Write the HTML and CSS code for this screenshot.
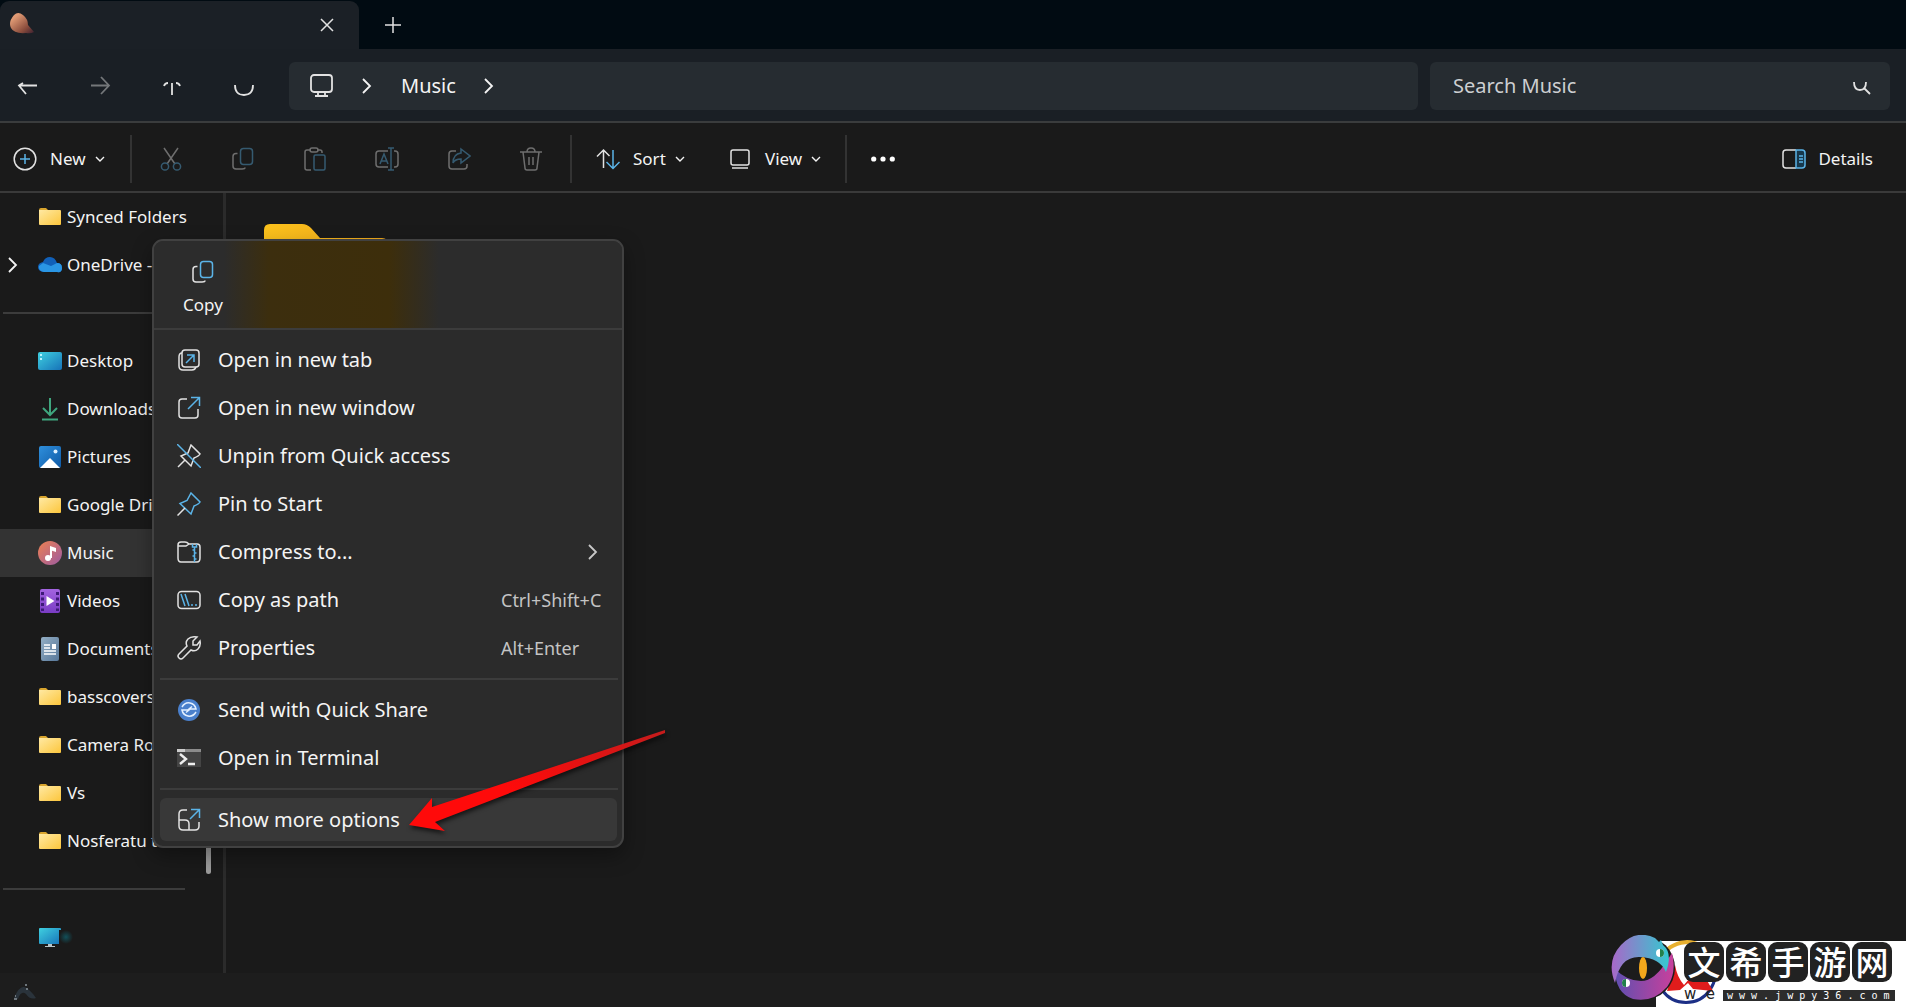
FILE: index.html
```html
<!DOCTYPE html>
<html lang="en">
<head>
<meta charset="utf-8">
<title>Music</title>
<link rel="stylesheet" href="styles.css">
</head>
<body>
<svg class="defs" aria-hidden="true">
  <defs>
    <linearGradient id="g-folder" x1="0" y1="0" x2="1" y2="1"><stop offset="0" stop-color="#ffe9a3"/><stop offset="1" stop-color="#fcc63c"/></linearGradient>
    <linearGradient id="g-desk" x1="0" y1="0" x2="1" y2="1"><stop offset="0" stop-color="#3fd0e0"/><stop offset="1" stop-color="#1672b8"/></linearGradient>
    <linearGradient id="g-pic" x1="0" y1="0" x2="1" y2="1"><stop offset="0" stop-color="#2f8fdc"/><stop offset="1" stop-color="#0f5aa6"/></linearGradient>
    <linearGradient id="g-music" x1="0" y1="0" x2="1" y2="1"><stop offset="0" stop-color="#ee8050"/><stop offset="1" stop-color="#9c5ba2"/></linearGradient>
    <linearGradient id="g-video" x1="0" y1="0" x2="0" y2="1"><stop offset="0" stop-color="#a364e0"/><stop offset="1" stop-color="#7a3cc4"/></linearGradient>
    <linearGradient id="g-doc" x1="0" y1="0" x2="1" y2="1"><stop offset="0" stop-color="#93aec4"/><stop offset="1" stop-color="#58789a"/></linearGradient>
    <linearGradient id="g-big" x1="0" y1="0" x2="1" y2="0"><stop offset="0" stop-color="#fcc21c"/><stop offset="1" stop-color="#f0a81c"/></linearGradient>
    <linearGradient id="g-tab" x1="0" y1="0" x2="1" y2="1"><stop offset="0.2" stop-color="#e09a74"/><stop offset="0.7" stop-color="#8a4c3c"/><stop offset="1" stop-color="#3a2030"/></linearGradient>
    <linearGradient id="g-eye-a" x1="0" y1="0" x2="1" y2="0"><stop offset="0" stop-color="#a868c8"/><stop offset="1" stop-color="#35c8d0"/></linearGradient>
    <linearGradient id="g-eye-b" x1="0" y1="0" x2="1" y2="0"><stop offset="0" stop-color="#5f4fb0"/><stop offset="1" stop-color="#c8409c"/></linearGradient>
    <linearGradient id="g-arrow" x1="0" y1="1" x2="1" y2="0"><stop offset="0.4" stop-color="#ff0a0a"/><stop offset="1" stop-color="#c41c1c"/></linearGradient>
  </defs>
  <symbol id="folder" viewBox="0 0 24 24"><path d="M1 5q0-2 2-2h5l2 2v3H1z" fill="#d9a52e"/><path d="M1 5h21q1 0 1 1v13q0 1-1 1H2q-1 0-1-1z" fill="url(#g-folder)"/></symbol>
  <symbol id="chev-down" viewBox="0 0 12 12"><path d="M2 4l4 4 4-4" fill="none" stroke="currentColor" stroke-width="1.4"/></symbol>
  <symbol id="chev-right" viewBox="0 0 16 16"><path d="M4 1l7 7-7 7" fill="none" stroke="currentColor" stroke-width="1.8"/></symbol>
  <symbol id="copy" viewBox="0 0 24 24"><rect x="9.500" y="1.500" width="12" height="16" rx="3" class="b"/><path d="M6.500 6.500H5Q2 6.500 2 9.500V19q0 3 3 3h6q3 0 3-1.500" class="w"/></symbol>
</svg>

<header class="tabstrip">
  <div class="tab">
    <svg class="i24" viewBox="0 0 24 24"><path d="M4 2q4-4 9 0t5 10l6 7q-3 2-8 1Q4 21 1 15T4 2z" fill="url(#g-tab)"/></svg>
    <button class="plain" aria-label="Close tab"><svg class="i16" viewBox="0 0 16 16"><path d="M2 2l12 12M14 2L2 14" class="w"/></svg></button>
  </div>
  <button class="plain newtab" aria-label="New tab"><svg class="i16" viewBox="0 0 16 16"><path d="M8 0v16M0 8h16" class="w"/></svg></button>
</header>

<nav class="navbar" aria-label="Navigation">
  <button class="iconbtn" aria-label="Back"><svg class="i24" viewBox="0 0 24 24"><path d="M3 11.500h18M10 20l-7-8.500 4-2.500" class="w2"/></svg></button>
  <button class="iconbtn dim" aria-label="Forward"><svg class="i24" viewBox="0 0 24 24"><path d="M3 11.500h18M13 3l8 8.500-8 8.500" class="w2"/></svg></button>
  <button class="iconbtn" aria-label="Up"><svg class="i24" viewBox="0 0 24 24"><path d="M12 9v12M4 12q1-3 4-3M20 12q-1-3-4-3" class="w2"/></svg></button>
  <button class="iconbtn" aria-label="Refresh"><svg class="i24" viewBox="0 0 24 24"><path d="M3 11q0 10 9 10t9-10" class="w2"/></svg></button>
  <div class="address">
    <svg class="i24 pc" viewBox="0 0 24 24"><rect x="2" y="1" width="21" height="17" rx="3" class="w2"/><path d="M9 18v4M16 18v4M6 22h13" class="w2"/></svg>
    <svg class="i16"><use href="#chev-right"/></svg>
    <a class="crumb" href="#music">Music</a>
    <svg class="i16"><use href="#chev-right"/></svg>
  </div>
  <div class="search">
    <input type="search" placeholder="Search Music" aria-label="Search Music">
    <svg class="i24" viewBox="0 0 24 24"><path d="M4 8q0 8 6 8t6-8M14 14l6 6" class="w2"/></svg>
  </div>
</nav>

<div class="commands" role="toolbar" aria-label="Commands">
  <button class="cmd new"><svg class="i24" viewBox="0 0 24 24"><circle cx="12" cy="12" r="10.800" class="w"/><path d="M12 7v10M7 12h10" class="b"/></svg><span>New</span><svg class="i12"><use href="#chev-down"/></svg></button>
  <i class="vr"></i>
  <div class="group">
    <button class="iconbtn off" aria-label="Cut"><svg class="i24" viewBox="0 0 24 24"><path d="M5 1l11 16M19 1L8 17" class="w"/><circle cx="6" cy="19.500" r="3.600" class="b"/><circle cx="18" cy="19.500" r="3.600" class="b"/></svg></button>
    <button class="iconbtn off" aria-label="Copy"><svg class="i24"><use href="#copy"/></svg></button>
    <button class="iconbtn off" aria-label="Paste"><svg class="i24" viewBox="0 0 24 24"><path d="M8 3H4Q2 3 2 5v16q0 2 2 2h4M14 3h3q2 0 2 2v1" class="w"/><rect x="7" y="1" width="8" height="4" rx="2" class="w"/><rect x="11" y="8" width="11" height="15" rx="1.500" class="b"/></svg></button>
    <button class="iconbtn off" aria-label="Rename"><svg class="i24" viewBox="0 0 24 24"><path d="M13 4H4Q1 4 1 7v10q0 3 3 3h9M19 4h1q3 0 3 3v10q0 3-3 3h-1" class="w"/><path d="M5 17l4-10 4 10M6 14h6M16 1v22M13 1h6M13 23h6" class="b"/></svg></button>
    <button class="iconbtn off" aria-label="Share"><svg class="i24" viewBox="0 0 24 24"><path d="M9 4H5Q2 4 2 7v12q0 3 3 3h12q3 0 3-3v-2" class="w"/><path d="M14 2l9 7-9 7v-4q-6 0-8 4 0-9 8-10z" class="b"/></svg></button>
    <button class="iconbtn off" aria-label="Delete"><svg class="i24" viewBox="0 0 24 24"><path d="M1 5h22M8 5q0-4 4-4t4 4M4 5l2 16q0 2 2 2h8q2 0 2-2l2-16M10 10v8M14 10v8" class="w"/></svg></button>
  </div>
  <i class="vr"></i>
  <button class="cmd sort"><svg class="i24" viewBox="0 0 24 24"><path d="M7.500 21V3M1 9.500L7.500 3l6 6" class="w"/><path d="M17 3v18M10.500 15l6.500 6.500 6.500-6.500" class="b"/></svg><span>Sort</span><svg class="i12"><use href="#chev-down"/></svg></button>
  <button class="cmd view"><svg class="i24" viewBox="0 0 24 24"><rect x="3" y="3" width="18" height="15" rx="2" class="w"/><path d="M4 21h16" class="w"/></svg><span>View</span><svg class="i12"><use href="#chev-down"/></svg></button>
  <i class="vr"></i>
  <button class="cmd more" aria-label="See more"><svg class="i24" viewBox="0 0 24 24"><g fill="#fff"><circle cx="2.700" cy="12" r="2.600"/><circle cx="12" cy="12" r="2.600"/><circle cx="21.300" cy="12" r="2.600"/></g></svg></button>
  <button class="cmd details"><svg class="i24" viewBox="0 0 24 24"><path d="M14 3h6q3 0 3 3v12q0 3-3 3h-6z" fill="#17384c"/><path d="M14 3H4Q1 3 1 6v12q0 3 3 3h10" class="w"/><path d="M14 3h6q3 0 3 3v12q0 3-3 3h-6zM17 9h4M17 12h4M17 15h4" class="b"/></svg><span>Details</span></button>
</div>

<div class="body">
  <aside class="sidebar">
    <a class="row" href="#synced"><i class="tw"></i><svg class="i24"><use href="#folder"/></svg><span>Synced Folders</span></a>
    <a class="row" href="#onedrive"><i class="tw"><svg class="i16"><use href="#chev-right"/></svg></i><svg class="i24" viewBox="0 0 24 24"><path d="M5 19Q0 18 0 14t5-5q2-5 7-5t7 6q5 0 5 5t-5 4z" fill="#1160b8"/><path d="M6 19Q0 18 1 13l4-3 8 3 6-3q5 0 5 5t-5 4z" fill="#2a96e4"/></svg><span>OneDrive - Personal</span></a>
    <hr>
    <a class="row" href="#desktop"><i class="tw"></i><svg class="i24" viewBox="0 0 24 24"><rect y="3" width="24" height="18" rx="2" fill="url(#g-desk)"/><path d="M2 5h2v2H2zM2 9h2v2H2zM18 20h2M21 20h2" fill="#b8f4ff"/></svg><span>Desktop</span></a>
    <a class="row" href="#downloads"><i class="tw"></i><svg class="i24" viewBox="0 0 24 24"><path d="M12 1v17M5 11l7 7 7-7M4 22.500h16" fill="none" stroke="#3fa67e" stroke-width="2"/></svg><span>Downloads</span></a>
    <a class="row" href="#pictures"><i class="tw"></i><svg class="i24" viewBox="0 0 24 24"><rect x="1" y="1" width="22" height="22" rx="2" fill="url(#g-pic)"/><path d="M2 23l10-10 10 10z" fill="#fff"/><circle cx="17.500" cy="6.500" r="2" fill="#dff1ff"/></svg><span>Pictures</span></a>
    <a class="row" href="#drive"><i class="tw"></i><svg class="i24"><use href="#folder"/></svg><span>Google Drive</span></a>
    <a class="row current" href="#music" aria-current="page"><i class="tw"></i><svg class="i24" viewBox="0 0 24 24"><circle cx="12" cy="12" r="12" fill="url(#g-music)"/><circle cx="10" cy="17" r="3" fill="#fff"/><path d="M12 17V5l6 2v4l-4-1.300V17z" fill="#fff"/></svg><span>Music</span></a>
    <a class="row" href="#videos"><i class="tw"></i><svg class="i24" viewBox="0 0 24 24"><rect x="2" width="20" height="24" rx="2" fill="url(#g-video)"/><path d="M4.500 3v19M19.500 3v19" stroke="#3e1a78" stroke-width="3" stroke-dasharray="3 2.500"/><path d="M8.500 7v10l8-5z" fill="#fff"/></svg><span>Videos</span></a>
    <a class="row" href="#documents"><i class="tw"></i><svg class="i24" viewBox="0 0 24 24"><rect x="3" width="18" height="24" rx="2" fill="url(#g-doc)"/><path d="M6 8h6M6 11h6M6 14h12M6 17h12" stroke="#fff" stroke-width="1.400"/><path d="M14 7h4v5h-4z" fill="#fff"/></svg><span>Documents</span></a>
    <a class="row" href="#basscovers"><i class="tw"></i><svg class="i24"><use href="#folder"/></svg><span>basscovers</span></a>
    <a class="row" href="#camera"><i class="tw"></i><svg class="i24"><use href="#folder"/></svg><span>Camera Roll</span></a>
    <a class="row" href="#vs"><i class="tw"></i><svg class="i24"><use href="#folder"/></svg><span>Vs</span></a>
    <a class="row" href="#nosferatu"><i class="tw"></i><svg class="i24"><use href="#folder"/></svg><span>Nosferatu t...</span></a>
    <hr>
    <a class="row" href="#pc" aria-label="This PC"><i class="tw"></i><svg class="i24" viewBox="0 0 24 24"><rect x="1" y="3" width="22" height="16" rx="1" fill="url(#g-desk)"/><path d="M10 19h4v2h3v1H7v-1h3z" fill="#b8c4c8"/></svg><i class="smudge"></i></a>
    <i class="thumb"></i>
  </aside>
  <main class="files">
    <svg class="bigfolder" viewBox="0 0 124 100"><path d="M0 6q0-6 6-6h32q5 0 9 4l9 10h62q6 0 6 6v80H0z" fill="url(#g-big)"/></svg>
  </main>
</div>

<footer class="status"><svg class="i24" viewBox="0 0 24 24"><path d="M2 18q5-12 10-11t12 11q-6 2-10-4-5-4-8 5z" fill="#2a333b"/><path d="M13 5h2M14 9h2M2 19h3M3 16h1" stroke="#88929a" stroke-width="1.500"/></svg></footer>

<div class="menu" role="menu">
  <div class="quick"><button class="copybtn" role="menuitem"><svg class="i24"><use href="#copy"/></svg><span>Copy</span></button></div>
  <div class="items">
    <button class="item" role="menuitem"><svg class="i24" viewBox="0 0 24 24"><rect x="5" y="2" width="17" height="17" rx="3" class="w"/><path d="M5 5q-3 0-3 4v9q0 4 4 4h9q3 0 4-3" class="w"/><path d="M9 15l8-8M10 7h7v7" class="b"/></svg><span>Open in new tab</span></button>
    <button class="item" role="menuitem"><svg class="i24" viewBox="0 0 24 24"><path d="M10 3H5Q2 3 2 6v13q0 3 3 3h13q3 0 3-3v-6" class="w"/><path d="M11 13L22 2M14 1.500h8.500V10" class="b"/></svg><span>Open in new window</span></button>
    <button class="item" role="menuitem"><svg class="i24" viewBox="0 0 24 24"><path d="M14 1l9 9q-1 2-6 4l-3 8-10-10 7-3zM8 16l-7 7" class="w"/><path d="M0 0l24 24" class="b"/></svg><span>Unpin from Quick access</span></button>
    <button class="item" role="menuitem"><svg class="i24" viewBox="0 0 24 24"><path d="M14 1l9 9q-1 2-6 4l-3 8L3 11.500l7-3z" class="b"/><path d="M8 16l-7.500 7.500" class="w"/></svg><span>Pin to Start</span></button>
    <button class="item" role="menuitem"><svg class="i24" viewBox="0 0 24 24"><path d="M1 6h8l3-2M1 5q0-3 3-3h4q2 0 4 2h8q3 0 3 3v11q0 4-3 4H4q-3 0-3-4z" class="w"/><path d="M15.500 4v3h4V4M17.500 7v15M17.500 10h-2M17.500 13h2M17.500 16h-2M17.500 19h2" class="b"/></svg><span>Compress to...</span><svg class="i16 sub"><use href="#chev-right"/></svg></button>
    <button class="item" role="menuitem"><svg class="i24" viewBox="0 0 24 24"><rect x="1" y="3.500" width="22" height="17" rx="3.500" class="w"/><path d="M4 6l4 12M8 6l4 12M14 17h2M18 17h2" class="b"/></svg><span>Copy as path</span><kbd>Ctrl+Shift+C</kbd></button>
    <button class="item" role="menuitem"><svg class="i24" viewBox="0 0 24 24"><path d="M20 1l-4 4v4h4l3-4q1 5-2 8t-7 1l-8 8q-2 2-4 0t0-4l8-8q-2-4 1-7t9-2z" class="w"/></svg><span>Properties</span><kbd>Alt+Enter</kbd></button>
    <hr>
    <button class="item" role="menuitem"><svg class="i24" viewBox="0 0 24 24"><circle cx="12" cy="12" r="11" fill="#4a80cc"/><path d="M5 9q3-5 8-4t6 6h-7l3-2.500M19 14q-3 5-8 4t-6-6h7l-3 2.500" fill="none" stroke="#e4f0ff" stroke-width="1.500"/></svg><span>Send with Quick Share</span></button>
    <button class="item" role="menuitem"><svg class="i24" viewBox="0 0 24 24"><path d="M0 3h24v18H0z" fill="#444"/><path d="M0 3h24v3H0z" fill="#8c8c8c"/><path d="M0 3h8v3H0z" fill="#ccc"/><path d="M3 8l6 5-6 5M11 18h7" fill="none" stroke="#eee" stroke-width="2.400"/></svg><span>Open in Terminal</span></button>
    <hr>
    <button class="item hot" role="menuitem"><svg class="i24" viewBox="0 0 24 24"><path d="M10 2H6Q2 2 2 6v12q0 4 4 4h12q4 0 4-4v-4M2 12h6q4 0 4 4v6" class="w"/><path d="M13 11l9-9M14 1.500h8.500V10" class="b"/></svg><span>Show more options</span></button>
  </div>
</div>

<svg class="pointer" viewBox="0 0 260 106" aria-hidden="true"><path d="M257 1v3L27 93l10 9L1 96 24 69v9z" fill="url(#g-arrow)"/></svg>

<div class="mark">
  <svg class="logo" viewBox="0 0 112 72" aria-hidden="true">
    <path d="M50 23A29 29 0 0 1 100 20" fill="none" stroke="#e8b030" stroke-width="4"/>
    <path d="M102 28A29 29 0 1 1 48 28" fill="none" stroke="#1c2f86" stroke-width="3"/>
    <path d="M56 56l8-26q2 12 9 20l10-12 8-20q0 16 3 24l8 14-20-2-5-6-8 7z" fill="#e01c1c"/>
    <circle cx="32" cy="33" r="32" fill="#1c1c1c"/>
    <path d="M4 34Q16 46 30 46t27-22l4-6q5 20-5 34-14 16-34 12Q4 58 4 34z" fill="url(#g-eye-b)"/>
    <path d="M4 48Q-5 26 10 10T44 3l4 4 2-2 2 5q10 8 3 27-6-14-26-15T4 48z" fill="url(#g-eye-a)"/>
    <ellipse cx="32" cy="33" rx="4" ry="11" fill="#f4a81c"/>
    <circle cx="49" cy="18" r="4" fill="#fff"/><circle cx="15" cy="48" r="4" fill="#fff"/><path d="M49 14a4 4 0 0 1 0 8zM15 44a4 4 0 0 0 0 8z" fill="#22804c"/>
  </svg>
  <div class="stamps"><b>文</b><b>希</b><b>手</b><b>游</b><b>网</b></div>
  <div class="url"><span>w&nbsp; e</span><span class="bar">w w w . j w p y 3 6 . c o m</span></div>
</div>
</body>
</html>
```
FILE: styles.css
```css
* { box-sizing: border-box; }
html, body { height: 100%; margin: 0; }
body {
  display: flex;
  flex-direction: column;
  position: relative;
  overflow: hidden;
  background: #1a1a1a;
  color: #f4f4f4;
  font: 17px/24px "Noto Sans", "Noto Sans CJK SC", sans-serif;
}
button, input { font: inherit; color: inherit; background: none; border: 0; padding: 0; }
a { color: inherit; text-decoration: none; }
svg { display: block; flex: none; }
.defs { position: absolute; width: 0; height: 0; }
.i24 { width: 24px; height: 24px; }
.i16 { width: 16px; height: 16px; }
.i12 { width: 12px; height: 12px; }
.w, .w2 { fill: none; stroke: #e2e2e2; stroke-width: 1.5; }
.w2 { stroke-width: 1.8; }
.b { fill: none; stroke: #5bb4e8; stroke-width: 1.5; }

.tabstrip { display: flex; flex: none; height: 49px; padding-top: 1px; background: #010b12; }
.tab {
  display: flex; align-items: center; justify-content: space-between;
  width: 359px; padding: 0 24px 0 10px;
  background: #1b2026; border-radius: 9px 9px 0 0;
}
.plain { display: flex; align-items: center; }
.newtab { margin-left: 26px; }

.navbar {
  display: flex; flex: none; align-items: center;
  height: 74px; padding: 2px 16px 0 8px;
  background: #1a1f25; border-bottom: 2px solid #3a3c3d;
}
.iconbtn { display: flex; align-items: center; justify-content: center; width: 40px; height: 40px; flex: none; }
.navbar .iconbtn { margin-right: 32px; }
.dim { opacity: .45; }
.off { opacity: .42; }
.address {
  display: flex; flex: 1; align-items: center;
  height: 48px; margin: 0 12px 0 -7px; padding-left: 20px;
  background: #262c31; border-radius: 6px; font-size: 20px;
}
.address .pc { margin-right: 26px; }
.crumb { margin: 0 25px 0 26px; }
.search {
  display: flex; align-items: center; justify-content: space-between;
  width: 460px; height: 48px; padding: 0 16px 0 23px;
  background: #262c31; border-radius: 6px; font-size: 20px;
}
.search input { flex: 1; min-width: 0; outline: 0; }
.search input::placeholder { color: #cdcfd1; opacity: 1; }

.commands {
  display: flex; flex: none; align-items: center;
  height: 70px; padding: 3px 33px 0 13px;
  border-bottom: 2px solid #3a3a3a;
}
.cmd { display: flex; align-items: center; gap: 13px; }
.cmd .i12 { margin-left: -5px; }
.vr { width: 2px; height: 48px; background: #333; }
.new { width: 117px; }
.group { display: flex; gap: 32px; padding: 0 19px; }
.sort { width: 132px; margin-left: 24px; }
.view { width: 117px; }
.more { margin-left: 24px; }
.details { margin-left: auto; gap: 12px; }

.body { display: flex; flex: 1; min-height: 0; }
.sidebar { position: relative; width: 226px; border-right: 3px solid #2b2b2b; }
.row { display: flex; align-items: center; height: 48px; gap: 5px; white-space: nowrap; }
.tw { display: flex; flex: none; justify-content: center; width: 33px; padding-right: 7px; }
.current { background: #333; }
hr { border: 0; height: 2px; background: #3c3c3c; }
.sidebar hr { margin: 23px 38px 23px 3px; }
.thumb { position: absolute; left: 206px; top: 470px; width: 5px; height: 211px; border-radius: 3px; background: #9c9c9c; }
.smudge { width: 14px; height: 14px; margin-left: -8px; background: radial-gradient(#12505a, #1a1a1a 70%); }
.files { flex: 1; padding: 31px 38px; }
.bigfolder { width: 124px; height: 100px; }
.status { flex: none; height: 34px; padding: 7px 12px; background: #1d1d1d; }

.menu {
  position: absolute; left: 152px; top: 239px; width: 472px;
  background: #2b2b2b; border: 2px solid #414141; border-radius: 11px;
  box-shadow: 0 8px 20px rgba(0, 0, 0, .35);
  overflow: hidden;
}
.quick {
  height: 89px; padding: 19px 29px 0; border-bottom: 2px solid #3c3c3c;
  background: linear-gradient(90deg, #2c2c2c 70px, #3c2e0e 115px, #3d2e0b 235px, #2c2c2c 285px);
}
.copybtn { display: flex; flex-direction: column; align-items: center; gap: 9px; }
.items { display: flex; flex-direction: column; padding: 6px 5px 5px 6px; }
.item {
  display: flex; align-items: center; gap: 17px;
  height: 48px; padding: 0 13px 0 17px; border-radius: 6px;
  font-size: 20px; text-align: left; white-space: nowrap;
}
.item kbd { width: 103px; margin-left: auto; font: 18px/24px "Noto Sans", sans-serif; color: #c4c4c4; }
.sub { margin-left: auto; margin-right: 3px; color: #c8c8c8; }
.items hr { width: 458px; margin: 6px 0; }
.items .hot { height: 43px; margin-top: 2px; background: #383838; }

.pointer { position: absolute; left: 408px; top: 729px; width: 260px; height: 106px; filter: drop-shadow(1px 3px 2px rgba(0, 0, 0, .6)); }

.mark {
  position: absolute; right: 0; bottom: 0; width: 250px; height: 66px;
  background: #fff; color: #222;
}
.logo { position: absolute; left: -45px; top: -6px; width: 112px; height: 72px; }
.stamps { display: flex; gap: 2px; padding: 1px 0 0 28px; position: relative; }
.stamps b {
  width: 40px; height: 40px; border-radius: 9px; background: #222; color: #fff;
  font: 500 33px/38px "Noto Sans CJK SC", sans-serif; text-align: center;
}
.url { display: flex; align-items: center; position: relative; padding: 3px 11px 0 28px; font: 15px/18px "DejaVu Sans", sans-serif; white-space: pre; }
.url .bar { margin: 2px 0 0 auto; width: 172px; padding-left: 4px; background: #2c2c2c; color: #fff; font: 10px/11px "DejaVu Sans Mono", monospace; }
```
